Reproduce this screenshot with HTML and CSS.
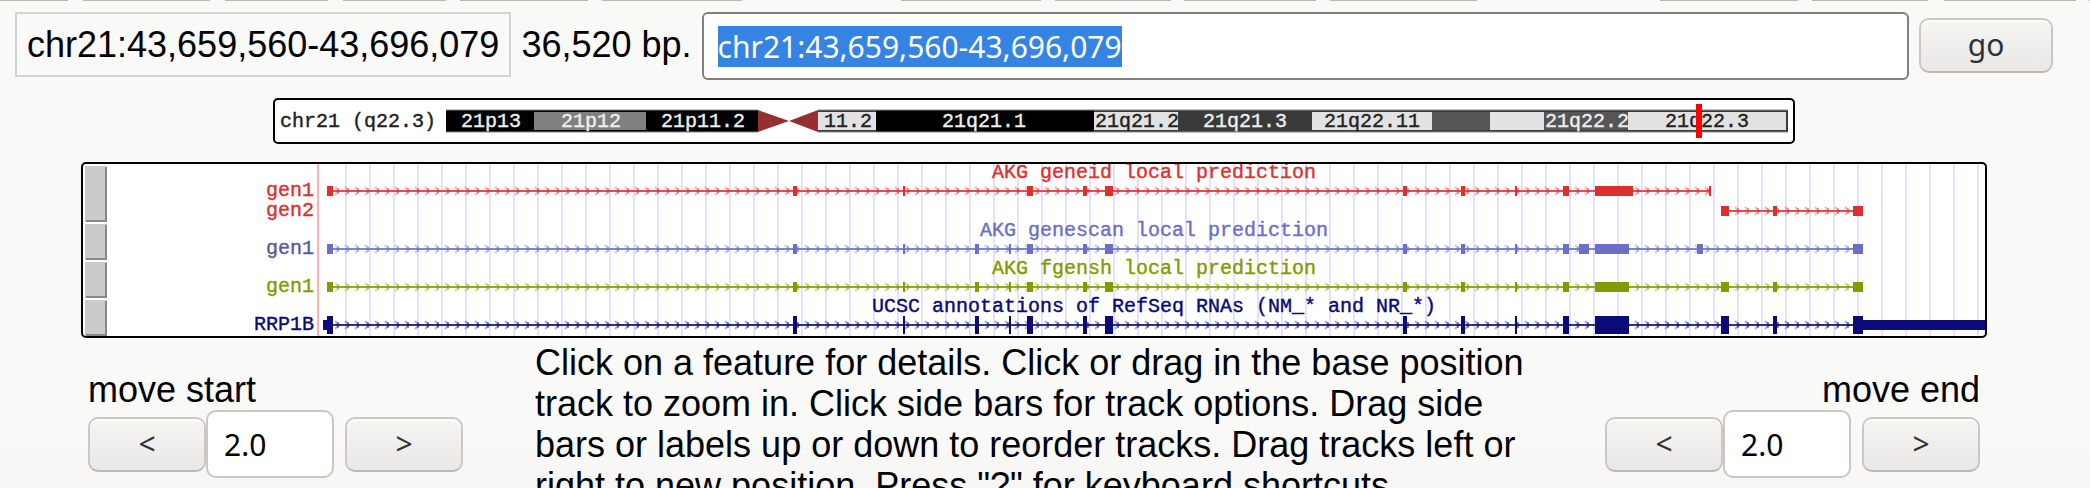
FILE: index.html
```
<!DOCTYPE html>
<html lang="en">
<head>
<meta charset="utf-8">
<title>Genome Browser</title>
<link rel="stylesheet" href="styles.css">
</head>
<body>
<div class="toolbar-edge" aria-hidden="true">
  <svg class="toolbar-edge-line" viewBox="0 0 2090 2" width="2090" height="2">
    <path stroke="#c0b6ae" stroke-width="1" d="M0 .5H68M83 .5H210M225 .5H328M343 .5H446M460 .5H588M602 .5H742M901 .5H1041M1055 .5H1171M1184 .5H1316M1330 .5H1477M1660 .5H1798M1812 .5H1928M1944 .5H2076M2089 .5H2090"/>
  </svg>
</div>
<main class="browser">
  <form class="position-bar">
    <span class="position">chr21:43,659,560-43,696,079</span>
    <span class="span-size">36,520 bp.</span>
    <input class="field search" id="search" type="text" aria-label="Position or search term" value="chr21:43,659,560-43,696,079">
    <button class="button go" type="button">go</button>
  </form>

  <svg class="panel ideogram" viewBox="0 0 1518 42" role="img" aria-label="Chromosome 21 ideogram">
    <g transform="translate(-275 -100)">
      <rect x="446" y="110" width="312" height="22" fill="#000"/>
      <rect x="534" y="112" width="112" height="18" fill="#808080"/>
      <path d="M758 110L789 121L758 132ZM818 110L789 121L818 132Z" fill="#962f2f"/>
      <rect x="818" y="110" width="970" height="22" fill="#3a3a3a"/>
      <rect x="818" y="112" width="58" height="18" fill="#e2e2e2"/>
      <rect x="876" y="110" width="218" height="22" fill="#000"/>
      <rect x="1094" y="112" width="84" height="18" fill="#e2e2e2"/>
      <rect x="1312" y="112" width="120" height="18" fill="#e2e2e2"/>
      <rect x="1432" y="112" width="58" height="18" fill="#555"/>
      <rect x="1490" y="112" width="54" height="18" fill="#e2e2e2"/>
      <rect x="1544" y="112" width="84" height="18" fill="#555"/>
      <rect x="1628" y="112" width="158" height="18" fill="#e2e2e2"/>
      <path d="M446 110H758M818 110H1788M446 132H758M818 132H1788" stroke="#888" stroke-width="1"/>
      <g class="bitmap dark">
        <text x="280" y="127">chr21 (q22.3)</text>
      </g>
      <g class="bitmap middle light">
        <text x="491" y="127">21p13</text>
        <text x="591" y="127">21p12</text>
        <text x="703" y="127">21p11.2</text>
        <text x="984" y="127">21q21.1</text>
        <text x="1245" y="127">21q21.3</text>
        <text x="1587" y="127">21q22.2</text>
      </g>
      <g class="bitmap middle dark">
        <text x="848" y="127">11.2</text>
        <text x="1137" y="127">21q21.2</text>
        <text x="1372" y="127">21q22.11</text>
        <text x="1707" y="127">21q22.3</text>
      </g>
      <rect x="1696" y="104" width="6" height="34" fill="#f00"/>
    </g>
  </svg>

  <svg class="panel tracks" viewBox="0 0 1902 172" role="img" aria-label="Gene prediction tracks">
    <defs>
      <pattern id="grid" x="345" y="0" width="24" height="400" patternUnits="userSpaceOnUse"><rect width="2" height="400" fill="#e2e2ff"/></pattern>
      <pattern id="arrow-red" x="331" y="-6" width="10" height="12" patternUnits="userSpaceOnUse"><path class="chevron red-line" d="M4 2L8 6L4 10"/><path class="tip red-line" d="M7 3V9"/></pattern>
      <pattern id="arrow-blue" x="331" y="-6" width="10" height="12" patternUnits="userSpaceOnUse"><path class="chevron blue-line" d="M4 2L8 6L4 10"/><path class="tip blue-line" d="M7 3V9"/></pattern>
      <pattern id="arrow-green" x="331" y="-6" width="10" height="12" patternUnits="userSpaceOnUse"><path class="chevron green-line" d="M4 2L8 6L4 10"/><path class="tip green-line" d="M7 3V9"/></pattern>
      <pattern id="arrow-navy" x="331" y="-6" width="10" height="12" patternUnits="userSpaceOnUse"><path class="chevron navy-line" d="M4 2L8 6L4 10"/><path class="tip navy-line" d="M7 3V9"/></pattern>
    </defs>
    <g transform="translate(-83 -164)">
      <rect x="345" y="164" width="1640" height="172" fill="url(#grid)"/>
      <rect x="317" y="164" width="2" height="172" fill="#ffb0b0"/>

      <g fill="#cbcbcb">
        <rect x="85" y="166" width="22" height="56"/>
        <rect x="85" y="224" width="22" height="36"/>
        <rect x="85" y="262" width="22" height="36"/>
        <rect x="85" y="300" width="22" height="36"/>
      </g>
      <path fill="none" stroke="#888" stroke-width="2" d="M106 167V221H86M106 225V259H86M106 263V297H86M106 301V335H86"/>

      <g class="bitmap red">
        <text x="992" y="178">AKG geneid local prediction</text>
        <text class="end" x="314" y="196">gen1</text>
        <text class="end" x="314" y="216">gen2</text>
      </g>
      <g class="red" transform="translate(0 191)">
        <rect x="333" y="-1" width="1377" height="2" opacity=".85"/>
        <rect x="335" y="-6" width="1374" height="12" fill="url(#arrow-red)"/>
        <path d="M327-5h6v10h-6zM793-5h4v10h-4zM903-5h2v10h-2zM1027-5h6v10h-6zM1083-5h4v10h-4zM1105-5h8v10h-8zM1403-5h4v10h-4zM1461-5h4v10h-4zM1515-5h2v10h-2zM1563-5h6v10h-6zM1595-5h38v10h-38zM1709-5h2v10h-2z"/>
      </g>
      <g class="red" transform="translate(0 211)">
        <rect x="1729" y="-1" width="124" height="2" opacity=".85"/>
        <rect x="1731" y="-6" width="120" height="12" fill="url(#arrow-red)"/>
        <path d="M1721-5h8v10h-8zM1773-5h4v10h-4zM1853-5h10v10h-10z"/>
      </g>

      <g class="bitmap blue">
        <text x="980" y="236">AKG genescan local prediction</text>
        <text class="end slate" x="314" y="254">gen1</text>
      </g>
      <g class="blue" transform="translate(0 249)">
        <rect x="333" y="-1" width="1520" height="2" opacity=".85"/>
        <rect x="335" y="-6" width="1516" height="12" fill="url(#arrow-blue)"/>
        <path d="M327-5h6v10h-6zM793-5h4v10h-4zM903-5h2v10h-2zM975-5h4v10h-4zM1009-5h2v10h-2zM1027-5h6v10h-6zM1083-5h4v10h-4zM1105-5h8v10h-8zM1403-5h4v10h-4zM1461-5h4v10h-4zM1515-5h2v10h-2zM1563-5h6v10h-6zM1579-5h10v10h-10zM1595-5h34v10h-34zM1697-5h6v10h-6zM1853-5h10v10h-10z"/>
      </g>

      <g class="bitmap green">
        <text x="992" y="274">AKG fgensh local prediction</text>
        <text class="end" x="314" y="292">gen1</text>
      </g>
      <g class="green" transform="translate(0 287)">
        <rect x="333" y="-1" width="1520" height="2" opacity=".85"/>
        <rect x="335" y="-6" width="1516" height="12" fill="url(#arrow-green)"/>
        <path d="M327-5h6v10h-6zM793-5h4v10h-4zM903-5h2v10h-2zM975-5h4v10h-4zM1009-5h2v10h-2zM1027-5h6v10h-6zM1083-5h4v10h-4zM1105-5h8v10h-8zM1403-5h4v10h-4zM1461-5h4v10h-4zM1515-5h2v10h-2zM1563-5h6v10h-6zM1595-5h34v10h-34zM1721-5h8v10h-8zM1773-5h4v10h-4zM1853-5h10v10h-10z"/>
      </g>

      <g class="bitmap navy">
        <text x="872" y="312">UCSC annotations of RefSeq RNAs (NM_* and NR_*)</text>
        <text class="end" x="314" y="330">RRP1B</text>
      </g>
      <g class="navy" transform="translate(0 325)">
        <rect x="333" y="-1" width="1520" height="2" opacity=".85"/>
        <rect x="335" y="-6" width="1516" height="12" fill="url(#arrow-navy)"/>
        <path d="M323-5h4v10h-4zM327-9h6v18h-6zM793-9h4v18h-4zM903-9h2v18h-2zM975-9h4v18h-4zM1009-9h2v18h-2zM1027-9h6v18h-6zM1083-9h4v18h-4zM1105-9h8v18h-8zM1403-9h4v18h-4zM1461-9h4v18h-4zM1515-9h2v18h-2zM1563-9h6v18h-6zM1595-9h34v18h-34zM1721-9h8v18h-8zM1773-9h4v18h-4zM1853-9h10v18h-10zM1863-5h122v10h-122z"/>
      </g>
    </g>
  </svg>

  <form class="move-bar">
    <div class="mover">
      <label for="move-start">move start</label>
      <div class="mover-controls">
        <button class="button step" type="button">&lt;</button>
        <input class="field amount" id="move-start" type="text" value="2.0">
        <button class="button step next" type="button">&gt;</button>
      </div>
    </div>
    <p class="hint">Click on a feature for details. Click or drag in the base position track to zoom in. Click side bars for track options. Drag side bars or labels up or down to reorder tracks. Drag tracks left or right to new position. Press "?" for keyboard shortcuts.</p>
    <div class="mover mover-end">
      <label for="move-end">move end</label>
      <div class="mover-controls">
        <button class="button step" type="button">&lt;</button>
        <input class="field amount" id="move-end" type="text" value="2.0">
        <button class="button step next" type="button">&gt;</button>
      </div>
    </div>
  </form>
</main>
<script src="script.js"></script>
</body>
</html>
```
FILE: styles.css
```
* { box-sizing: border-box; }

html { overflow: hidden; }

body {
  margin: 0;
  height: 100vh;
  overflow: hidden;
  background: linear-gradient(#f9f9f8 0, #f9f9f8 440px, #f7f6f5 488px);
  color: #000;
  font: 36px/41px "Liberation Sans", Arial, sans-serif;
}

.toolbar-edge { height: 2px; overflow: hidden; }
.toolbar-edge-line { display: block; }

.browser { padding: 10px 22px 0 0; }

.position-bar {
  display: flex;
  align-items: flex-start;
  gap: 10px;
  padding: 0 15px;
}

.position {
  padding: 10px;
  border: 2px solid #d3d3d1;
  white-space: nowrap;
}

.span-size { padding-top: 12px; white-space: nowrap; }

.field {
  min-width: 0;
  margin: 0;
  border: 2px solid #cdc7c2;
  border-radius: 10px;
  padding: 14px 16px;
  height: 68px;
  background: #fff;
  color: #000;
  font: 30px/36px "Noto Sans", sans-serif;
  outline: none;
}

.search {
  flex: 1;
  padding: 14px;
  border-color: #808080;
  border-radius: 6px;
}

.search::selection { background: #3584e4; color: #fff; }

.button {
  margin: 0;
  padding: 7px 0 8px;
  border: 2px solid #cdc7c2;
  border-bottom-color: #bfb8b1;
  border-radius: 10px;
  background: linear-gradient(#f6f5f4, #eae8e7);
  box-shadow: inset 0 2px #fff;
  color: #2e3436;
  font: 30px/36px "Noto Sans", sans-serif;
}

.go { width: 134px; margin-top: 6px; }

.panel {
  display: block;
  width: calc(100% - 40px);
  margin: 0 auto;
  border: 2px solid #000;
  border-radius: 5px;
  background: #fff;
}

.ideogram { max-width: 1522px; margin-top: 18px; }
.tracks { max-width: 1906px; margin-top: 18px; }

.bitmap { font: 20px "Liberation Mono", monospace; stroke-width: .4px; white-space: pre; }
.middle { text-anchor: middle; }
.end { text-anchor: end; }
.light { fill: #eee; stroke: #eee; }
.dark { fill: #222; stroke: #222; }
.red { fill: #dd302d; }
.blue { fill: #6b70c6; }
.slate { fill: #5a5a96; }
.green { fill: #849a00; }
.navy { fill: #0a0a78; }
.bitmap.red { stroke: #dd302d; }
.bitmap.blue { stroke: #6b70c6; }
.bitmap.green { stroke: #849a00; }
.bitmap.navy { stroke: #0a0a78; }
.bitmap .slate { stroke: #5a5a96; }

.chevron { fill: none; stroke-width: 2px; opacity: .35; }
.tip { stroke-width: 2px; opacity: .4; }
.red-line { stroke: #dd302d; }
.blue-line { stroke: #6b70c6; }
.green-line { stroke: #849a00; }
.navy-line { stroke: #0a0a78; }

.move-bar {
  display: flex;
  align-items: flex-start;
  gap: 72px;
  padding: 4px 88px 0;
}

.mover { padding-top: 27px; }
.mover label { display: block; }
.mover-end label { text-align: right; }

.mover-controls { display: flex; align-items: center; }
.step { width: 118px; }
.next { margin-left: 11px; }
.amount { width: 128px; }

.hint { flex: 1; margin: 0; }
```
FILE: script.js
```
const search = document.getElementById("search");
search.focus();
search.select();
```
